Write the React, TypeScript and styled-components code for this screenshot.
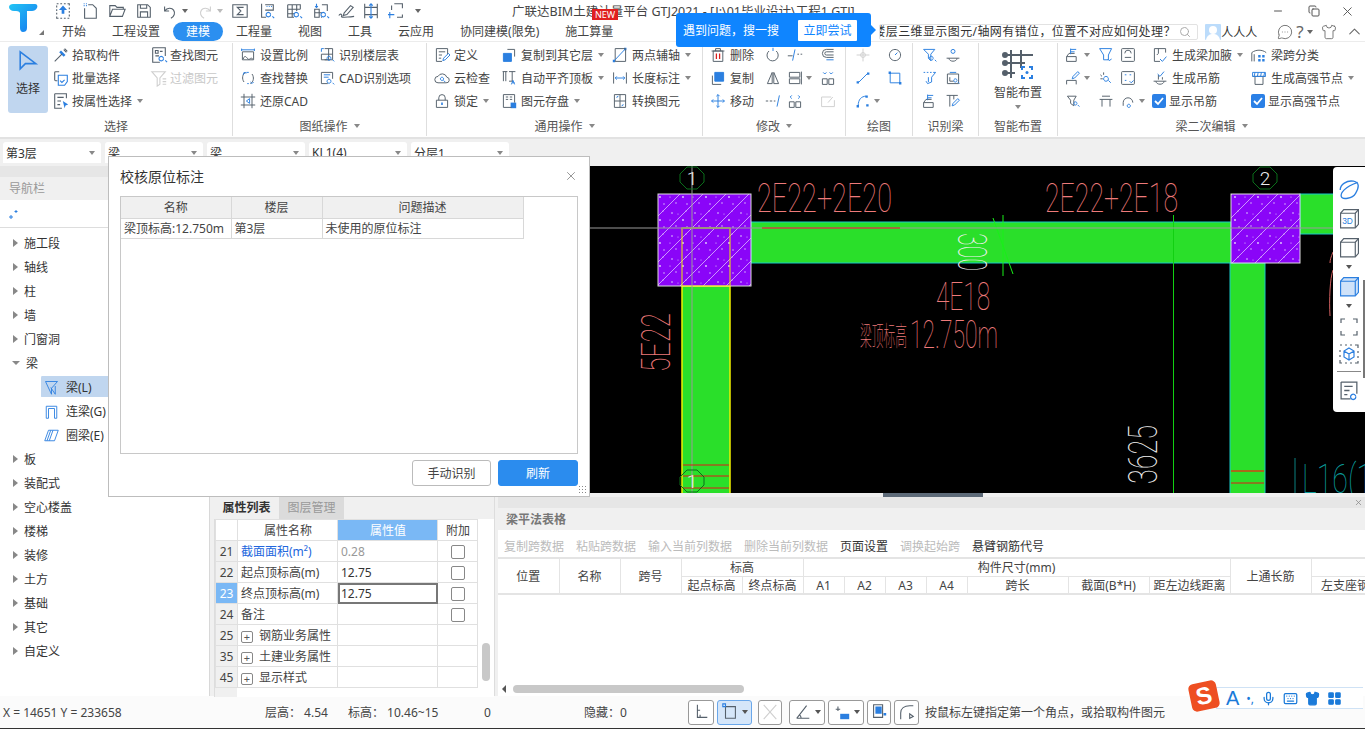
import React from 'react';
import styled, { createGlobalStyle } from 'styled-components';
import { Search, X, ChevronUp, Shirt, MessageCircleMore, Mic, Keyboard, LayoutGrid, Copy, Minus } from 'lucide-react';

const Global = createGlobalStyle`
  html, body { margin: 0; padding: 0; background: #fff; }
  #root { width: 1365px; height: 729px; }
  * { box-sizing: border-box; }
`;

const DARK = '#55606b';
const BLUE = '#2b7fe0';

/* icon table: [dark strokes, blue strokes, blue fill, red strokes] in a 20x20 box */
const I: Record<string, [string, string?, string?, string?]> = {
  upload: ['M3 2h2M7 2h2M11 2h2M15 2h2v2M17 6v2M17 10v2M17 14v2M17 18h-2M13 18h-2M9 18H7M5 18H3v-2M3 14v-2M3 10V8M3 6V4', '', 'M10 4l4.5 5H11.5v4h-3V9H5.5z'],
  newf: ['M8 3h5l4 4v11H4V7', 'M3 2h1M5.5 2h1M3 4h1M5.5 4h1'],
  open: ['M2 16V4h6l2 2h7v2M2 16l3-8h14l-3 8z'],
  save: ['M3 3h11l3 3v11H3zM6 3v4h7V3M6 17v-6h8v6', ''],
  undo: ['M4 5v5h5M4 10c3-4 8-4 10-1s1 7-3 9'],
  redo: ['M16 5v5h-5M16 10c-3-4-8-4-10-1s-1 7 3 9'],
  sigma: ['M2 3h16v14H2zM14 6H7l4 4-4 4h7'],
  tbl1: ['M4 2v15h5M8 3h9v6H8', 'M9.5 5h1M12 5h1M14.5 5h1M14 14a2.5 2.5 0 1 0 0 .1M16 16l2 2'],
  tbl2: ['M3 3h14v5M3 3v14h7M3 8h14M3 13h8M8 3v14M13 3v7', 'M15 14a2.5 2.5 0 1 0 0 .1M17 16l2 2'],
  tbl3: ['M3 8h5v9H3zM3 12h5M11 3h6v7M8 12h3M11 17h-1', 'M5 2v4M3.5 4.5L5 6l1.5-1.5M15 14a2.5 2.5 0 1 0 0 .1M17 16l2 2'],
  pen: ['M2 15c2-3 4-1 3 1s14 0 14 0M8 12l7-8 3 2-7 8-4 1z'],
  rows: ['M3 2v16M17 2v16M3 6h14M3 14h14', 'M10 2v16M8 4l2-2 2 2M8 16l2 2 2-2'],
  corner: ['M7 2h9v5M16 14v3h-6M4 4v5', 'M2 11v7M0 14h7'],
  arrow: ['', 'M4 3v13l4-4 8 0z'],
  pick: ['M3 17l8-8M13 4l3 3M14 3l3 3', '', 'M10 5l5 5-2 2-5-5z'],
  batch: ['M8 3H4a1 1 0 0 0-1 1v8a1 1 0 0 0 1 1h2', 'M7 7h10v7l-3 4H7zM9 13l2 2 3-3'],
  attr: ['M3 2h13v5M3 2v16h8M6 6h7M6 10h4M6 14h3', '', 'M12 10l6 4-3 1-1 3z'],
  find: ['M3 2h14v9M3 2v16h8M6 5h3v3H6zM11 6h3M6 11h4', 'M15 14a2.5 2.5 0 1 0 0 .1M17 16l2 2'],
  filter: ['M2 3h15l-6 7v7l-3 2v-9zM14 11h4M14 14h4M14 17h4'],
  ratio: ['M3 6h14v10H3zM4 15c2-6 4-2 6 0s3-3 6 0', 'M2 2v3M18 2v3M2 3.5h16'],
  replace: ['M7 3c-4 2-5 8-2 12M13 17c4-2 5-8 2-12', 'M4 6l1-3 3 1M13 15l2 2 2-2M8 3h3M9 17h2'],
  restore: ['M1 5h18M1 15h18M5 1v18M15 1v18', 'M12 7l-4 3 4 3z'],
  floor: ['M7 2h10v14H7M3 9h14M3 9v7h10M12 2v14', 'M3 2h3M3 2v4M15 14a2.5 2.5 0 1 0 0 .1M17 16l2 2'],
  cad: ['M3 3h14v8M3 3v14h8', 'M15 14a2.5 2.5 0 1 0 0 .1M17 16l2 2M6 6h8M6 9h6'],
  define: ['M3 2h14v7M3 2v16h7M6 6h8M6 10h4M6 14h3', 'M11 17l1-3 6-6 2 2-6 6z'],
  cloud: ['M5 16a4 4 0 0 1 0-8 6 6 0 0 1 11 1 3.5 3.5 0 0 1-1 7z', 'M12 11a2 2 0 1 0 0 .1M12 13l2 2'],
  lock: ['M3 9h14v9H3zM6 9V6a4 4 0 0 1 8 0v3', '', 'M9 12h2v3H9z'],
  copyf: ['M8 3h9v9', 'M3 8h10v10H3z', 'M3 8h10v10H3z'],
  align: ['M3 2v12M6 2v12M2 2h6M14 2v12M10 14h5M10 2h8', 'M13 18l2-5 2 5M14 16h3'],
  store: ['M3 2h14v10M3 2v16h10M6 5h3M11 5h3M6 8h3M11 8h3', '', 'M12 12h7v7h-7z'],
  twop: ['M4 2h13v16H4z', 'M2 18L17 2', 'M1 16h3v3H1zM15 1h3v3h-3z'],
  dim: ['M2 3v14M18 3v14', 'M4 10h12M6 8l-2 2 2 2M14 8l2 2-2 2'],
  conv: ['M3 2h14v16H3zM10 2v16M3 10h14', 'M6 6a2 2 0 0 1 2-2M14 14a2 2 0 0 1-2 2'],
  del: ['M4 5h12v13H4zM2 5h16M7 5V2h6v3', '', '', 'M8 8v7M12 8v7'],
  rot: ['M5 5a7 7 0 1 0 9 0', 'M10 1v4'],
  ext: ['M1 11h6M13 9h2M17 9h2', 'M10 3L7 17'],
  off: ['M17 3H8a5 5 0 0 0 0 10h9M17 6H8a2 2 0 0 0 0 4h9', 'M17 16H8'],
  copy2: ['M3 7v11h11', 'M6 3h11v11H6z', 'M6 3h11v11H6z'],
  mirror: ['M9 3L3 17h6zM11 3l6 14h-6z'],
  stack: ['M3 3h13v6H3zM3 11h13v6H3zM18 2v16'],
  merge: ['M3 11h6v7H3zM11 11h6v7h-6z', 'M4 3l2 2 2-2M16 3l-2 2-2-2'],
  move: ['', 'M10 2v16M2 10h16M8 4l2-2 2 2M8 16l2 2 2-2M4 8l-2 2 2 2M16 8l2 2-2 2'],
  trim: ['M1 10h3M6 10h3M11 10h2', 'M18 3l-3 14'],
  split: ['M3 11h6v7H3zM11 11h6v7h-6z', 'M6 3L4 5l2 2M14 3l2 2-2 2'],
  edit: ['M2 5h12M2 5v12h16V9M10 12l6-7'],
  point: ['M2 10h16M10 2v16M7 10a3 3 0 1 0 6 0 3 3 0 0 0-6 0'],
  gauge: ['M17 10a7 7 0 1 0 0 .1', 'M10 10l3-3'],
  line: ['', 'M4 16L16 4', 'M2 14h3v3H2zM15 3h3v3h-3z'],
  rect: ['', 'M4 4h12v12H4z', 'M2 2h3v3H2zM15 15h3v3h-3z'],
  arc: ['', 'M4 16c0-8 4-12 10-12', 'M2 15h3v3H2zM13 3h3v3h-3zM14 14h3v3h-3z'],
  fq: ['', 'M2 3h14l-5 6v8l-3-3V9z M14 14a2.5 2.5 0 1 0 0 .1M16 16l2 2'],
  hang: ['M2 14h16M5 14c0 5 10 5 10 0', 'M10 3a2.5 2.5 0 1 0 0 5 2.5 2.5 0 0 0 0-5z'],
  dashf: ['', 'M2 3h2M6 3h2M10 3h2M14 3h3l-5 6v6M8 9v6M5 14l2 3 5-2'],
  bq: ['M3 5h14v12H3zM6 9v5h5', 'M15 13a2 2 0 1 0 0 .1M16 15l2 2M6 3h8'],
  tpen: ['M2 3h14M6 3v14M11 3v5', 'M9 16l1-3 6-6 2 2-6 6z'],
  beamup: ['M2 12h12v6H2zM2 12l3-4h7', 'M7 2v7M7 3h7M7 6h5'],
  fdown: ['', 'M2 2h15l-4 8v6H7v-6zM12 15l2 2 3-2'],
  rrect: ['M3 2h14a1 1 0 0 1 1 1v14a1 1 0 0 1-1 1H3a1 1 0 0 1-1-1V3a1 1 0 0 1 1-1zM6 8a4 4 0 0 1 8 0M6 13h8'],
  penb: ['M2 18v-5h12v5', 'M9 11l1-3 6-6 2 2-6 6z'],
  spark: ['M3 6l2 2M3 11h3M7 3v3', 'M13 11a3 3 0 1 0 0 .1M13 13l3 3'],
  dots: ['M3 2h14a1 1 0 0 1 1 1v14a1 1 0 0 1-1 1H3a1 1 0 0 1-1-1V3a1 1 0 0 1 1-1z', 'M6 6h2M12 6h2M6 13h2M12 14l2 2 3-3'],
  bq2: ['M3 4h11l-3 5v7l-4-3V9z', 'M15 13a2 2 0 1 0 0 .1M16 15l2 2'],
  bridge: ['M2 8h16M5 8v9M15 8v9M5 4h10'],
  hook: ['M4 12a6 6 0 0 1 12 0M4 12v4', 'M13 16a2 2 0 1 0 0 .1'],
  haunch: ['M3 2h14v5M3 2v16h7M8 2v6l-2 2', 'M10 15l3 3 5-6'],
  hangc: ['M2 14h16M5 14c0 5 10 5 10 0M8 6v6M13 9v3', 'M7 5l3 3 5-6'],
  span: ['M1 18V7c5-4 13-4 18 0M4 18V9', '', 'M9 10h3v3H9zM14 10h3v3h-3zM9 15h3v3H9zM14 15h3v3h-3z'],
  hsnode: ['M5 8v10h10V8M2 8h16', 'M2 3h16v5H2zM5 3l-1 5M9 3l-1 5M13 3l-1 5M17 3l-1 5'],
  navf: ['', 'M2 2h16l-8 9v8zM9 10l6 9V8'],
  navu: ['', 'M3 19V3h14v16h-3V6H6v13z'],
  navr: ['', 'M6 3h13l-5 14H1zM9 3L4 17M12 3L7 17'],
  st1: ['M6 2v14h11M9 16v-3M6 8h3'],
  st2: ['M5 4h11v13H5z', 'M2 1h3v3H2z'],
  st3: ['M3 2l14 16M17 2L3 18'],
  st4: ['M3 17L14 3M3 17h14M8 17a6 6 0 0 0-2-4'],
  st5: ['M3 7h5M5.5 4v5', '', 'M8 12h10v6H8z'],
  st6: ['M4 2h10v14H4z', '', 'M6 4h7v8H6zM15 11h3v3h-3z'],
  st7: ['M3 18v-7c0-5 4-8 10-8h4M13 17v-5l4 3z'],
  orbit: ['', 'M2 10c0-5 6-9 12-8s5 6 2 11-12 6-13 3 3-9 15-13'],
  corners: ['M2 6V2h4M14 2h4v4M18 14v4h-4M6 18H2v-4'],
  dcube: ['M1 1h2M6 1h2M11 1h2M16 1h3v3M19 7v2M19 12v2M19 17v2h-3M13 19h-2M8 19H6M3 19H1v-3M1 13v-2M1 8V6', 'M10 4l5 3v6l-5 3-5-3V7zM5 7l5 3 5-3M10 10v6'],
  rep: ['M2 2h15v11M2 2v16h9M5 6h8M5 10h5M5 14h3', 'M16 16a2.5 2.5 0 1 0 0 .1'],
};

const Ic = ({ n, s = 18, off }: { n: string; s?: number; off?: boolean }) => {
  const [d, b, f, r] = I[n] || [''];
  return (
    <svg width={s} height={s} viewBox="0 0 20 20" fill="none" strokeWidth={1.2} style={{ flex: 'none' }}>
      {f && <path d={f} fill={off ? '#ccc' : BLUE} />}
      {d && <path d={d} stroke={off ? '#cfcfcf' : DARK} />}
      {b && <path d={b} stroke={off ? '#cfcfcf' : BLUE} />}
      {r && <path d={r} stroke="#d92020" strokeWidth={1.6} />}
    </svg>
  );
};

const BoxIcon = ({ on, label }: { on?: boolean; label?: string }) => (
  <svg width="21" height="21" viewBox="0 0 20 20" fill="none" stroke={on ? BLUE : DARK} strokeWidth="1.1" style={{ flex: 'none' }}>
    <path d="M1.5 5l3-3.500h14v14l-3 3.500h-14z" fill={on ? '#cfe2f9' : '#fff'} />
    <path d="M1.5 5h14v13.500M15.500 5l3-3.500" />
    {label && <text x="3" y="15" fontSize="8" fontFamily="Liberation Sans, sans-serif" fill={BLUE} stroke="none">{label}</text>}
  </svg>
);

const Root = styled.div`
  position: relative; width: 1365px; height: 729px; overflow: hidden; background: #fff; display: flex; flex-direction: column;
  font-family: "Noto Sans", "Noto Sans CJK SC", sans-serif; font-size: 12px; color: #333;
`;
const Header = styled.header`display: flex; height: 42px; background: #fff; border-bottom: 1px solid #ececec;`;
const LogoBox = styled.div`position: relative; width: 49px; flex: none; padding: 3px 0 0 8px;`;
const LogoCorner = styled.span`position: absolute; left: 39px; top: 30px; width: 0; height: 0; border-left: 5px solid transparent; border-bottom: 5px solid #777;`;
const HeadRight = styled.div`flex: 1; min-width: 0; display: flex; flex-direction: column;`;
const TopRow = styled.div`display: flex; align-items: center; height: 22px;`;
const Qat = styled.div`display: flex; align-items: center; width: 463px; padding-left: 5px; flex: none;`;
const QatSlot = styled.span<{ $w: number }>`display: inline-flex; align-items: center; width: ${p => p.$w}px;`;
const Title = styled.div`position: relative; top: 1px; white-space: nowrap; font-size: 12.5px; color: #444; line-height: 22px; flex: none;`;
const NewBadge = styled.span`position: absolute; left: 80px; top: 8px; width: 26px; height: 11px; background: #e02020; color: #fff; font-size: 9px; line-height: 11px; text-align: center;`;
const WinCtl = styled.div`margin-left: auto; display: flex; align-items: center; gap: 20px; padding-right: 10px; color: #555; flex: none;`;
const TabRow = styled.nav`display: flex; align-items: center; height: 19px;`;
const Tab = styled.span<{ $on?: boolean }>`
  padding: 0 13px; height: 19px; line-height: 19px; border-radius: 10px; white-space: nowrap;
  background: ${p => (p.$on ? '#2b8ff0' : 'transparent')}; color: ${p => (p.$on ? '#fff' : '#444')};
`;
const SearchBox = styled.div`
  margin-left: 253px; width: 319px; height: 16px; background: #fff; border: 1px solid #e2e2e2; border-radius: 2px; display: flex; align-items: center; overflow: hidden; flex: none;
`;
const SearchText = styled.span`flex: 1; white-space: nowrap; overflow: hidden; margin-left: -7px; line-height: 14px; color: #333; letter-spacing: .4px;`;
const Avatar = styled.span`width: 16px; height: 16px; margin-left: 7px; background: #bcdcfb; border-radius: 1px; flex: none; display: flex;`;
const UserName = styled.span`white-space: nowrap; margin-right: 20px;`;
const HeadTools = styled.div`display: flex; align-items: center; gap: 3px; color: #666; font-size: 17px;`;

const Ribbon = styled.section`display: flex; height: 97px; background: #fff; border-bottom: 2px solid #e2e2e2;`;
const Group = styled.div<{ $w: number }>`
  width: ${p => p.$w}px; flex: none; display: flex; flex-direction: column; position: relative; height: 93px; margin-top: 1px; border-right: 1px solid #dedede;
  &:last-child { border-right: 0; flex: 1; }
`;
const GroupBody = styled.div<{ $pl: number }>`display: flex; height: 74px; padding: 0 0 0 ${p => p.$pl}px;`;
const GroupLabel = styled.div`display: flex; align-items: center; justify-content: center; gap: 6px; height: 20px; color: #555;`;
const Col = styled.div<{ $w: number }>`width: ${p => p.$w}px; flex: none; display: flex; flex-direction: column;`;
const Item = styled.div<{ $off?: boolean }>`display: flex; align-items: center; height: 23px; white-space: nowrap; color: ${p => (p.$off ? '#c8c8c8' : '#444')};`;
const Slot = styled.span`display: inline-flex; width: 20px; flex: none;`;
const Caret = styled.i<{ $ml?: number; $c?: string }>`
  display: inline-block; width: 0; height: 0; margin-left: ${p => p.$ml ?? 5}px; border: 3px solid transparent; border-top: 4px solid ${p => p.$c ?? '#888'}; border-bottom: 0; flex: none;
`;
const BigBtn = styled.div`width: 40px; height: 67px; margin: 3px 4px 0 8px; background: #c0d6ef; border-radius: 3px; display: flex; flex-direction: column; align-items: center; padding-top: 2px; flex: none;`;
const BigLabel = styled.span`margin-top: 5px;`;
const BigSmart = styled.div`width: 100%; display: flex; flex-direction: column; align-items: center; padding-top: 6px; gap: 4px; color: #444;`;
const Check = styled.span`width: 14px; height: 14px; background: #2b80e6; border-radius: 2px; margin-right: 3px; display: inline-flex; align-items: center; justify-content: center; flex: none;`;

const SelBar = styled.div`display: flex; gap: 4px; height: 27px; padding: 3px 0 0 3px; background: #f0f0f0;`;
const Sel = styled.div`width: 98px; height: 21px; background: #fff; border-radius: 3px 3px 0 0; display: flex; align-items: center; justify-content: space-between; padding: 0 6px 0 3px; color: #333;`;

const Main = styled.main`display: flex; height: 530px; background: #f0f0f0;`;
const Nav = styled.aside`width: 210px; flex: none; background: #fff; border-right: 1px solid #d8d8d8; display: flex; flex-direction: column;`;
const NavStrip = styled.div`height: 11px; background: #e6e6e6;`;
const NavHead = styled.div`height: 23px; background: #f0f0f0; color: #999; padding-left: 9px; line-height: 24px; font-size: 12px;`;
const NavTool = styled.div`height: 28px; border-bottom: 1px solid #ddd; display: flex; align-items: center; padding-left: 9px;`;
const Tree = styled.ul`list-style: none; margin: 0; padding: 3px 0 0;`;
const TreeRow = styled.li`height: 24px; display: flex; align-items: center; padding-left: 13px;`;
const Tri = styled.i<{ $open?: boolean }>`
  width: 0; height: 0; margin-right: 6px; flex: none;
  ${p => (p.$open
    ? 'border: 4px solid transparent; border-top: 4px solid #888; border-bottom: 0; margin-left: -1px;'
    : 'border: 4px solid transparent; border-left: 5px solid #888; border-right: 0;')}
`;
const TreeChild = styled.li<{ $on?: boolean }>`
  height: 24px; margin-left: 41px; padding: 1px 0 1px 3px; display: flex; align-items: center; gap: 7px; white-space: nowrap;
  background: ${p => (p.$on ? 'linear-gradient(#c0d6ef,#c0d6ef) 0 1px/100% 21px no-repeat' : 'none')}; border-radius: 3px 0 0 3px;
`;
const Work = styled.div`flex: 1; min-width: 0; margin-left: 4px; display: flex; flex-direction: column;`;
const Canvas = styled.div`height: 327px; background: #000; position: relative; overflow: hidden;`;
const Splitter = styled.div`height: 4px; background: #f0f0f0;`;
const SplitHandle = styled.div`width: 100px; height: 4px; margin-left: 669px; background: #5d6a78;`;
const Lower = styled.div`flex: 1; display: flex; gap: 2px; min-height: 0;`;
const PropPanel = styled.section`width: 281px; flex: none; background: #f0f0f0; display: flex; flex-direction: column; border-right: 1px solid #ddd;`;
const PropTabs = styled.div`display: flex; height: 22px; padding-left: 0;`;
const PropTab = styled.span<{ $on?: boolean }>`
  width: 65px; text-align: center; line-height: 22px; font-weight: ${p => (p.$on ? 700 : 400)};
  background: ${p => (p.$on ? '#f0f0f0' : '#dbdbdb')}; color: ${p => (p.$on ? '#333' : '#999')};
`;
const PropBody = styled.div`flex: 1; background: #fff; position: relative; border-left: 1px solid #ddd;`;
const PropTable = styled.table`border-collapse: collapse; table-layout: fixed; width: 262px; background: #fff;
  td, th { border: 1px solid #e0e0e0; height: 21px; padding: 0 2px 0 3px; font-weight: 400; white-space: nowrap; overflow: hidden; }
`;
const HeadCell = styled.th<{ $hl?: boolean }>`
  text-align: center; background: ${p => (p.$hl ? '#7ab8f5' : '#fff')}; color: ${p => (p.$hl ? '#fff' : '#444')};
`;
const IdxCell = styled.td<{ $on?: boolean }>`
  background: ${p => (p.$on ? '#7ab8f5' : '#f0f0f0')}; color: ${p => (p.$on ? '#fff' : '#444')}; font-weight: ${p => (p.$on ? 700 : 400)}; text-align: center; font-size: 12px;
  && { padding: 0; }
`;
const NameCell = styled.td<{ $link?: boolean }>`color: ${p => (p.$link ? '#2266dd' : '#444')};`;
const ValCell = styled.td<{ $mute?: boolean; $edit?: boolean }>`
  color: ${p => (p.$mute ? '#999' : '#333')};
  && { ${p => (p.$edit ? 'outline: 2px solid #777; outline-offset: -2px;' : '')} }
`;
const BoxCell = styled.td`&& { text-align: center; padding: 0; }`;
const CB = styled.span`display: inline-block; width: 14px; height: 14px; border: 1px solid #888; border-radius: 2px; vertical-align: middle;`;
const Plus = styled.span`display: inline-block; width: 12px; height: 12px; border: 1px solid #888; border-radius: 2px; line-height: 10px; text-align: center; font-size: 11px; margin-right: 6px; color: #555; vertical-align: middle;`;
const Thumb = styled.div`position: absolute; left: 267px; top: 124px; width: 8px; height: 38px; background: #c8c8c8; border-radius: 4px;`;
const StubRow = styled.div`width: 22px; height: 9px; background: #f0f0f0;`;

const BeamPanel = styled.section`flex: 1; min-width: 0; background: #fff; display: flex; flex-direction: column; overflow: hidden; margin-left: 1px;`;
const BeamStrip = styled.div`height: 11px; background: #e6e6e6; display: flex; justify-content: flex-end; align-items: center; padding-right: 2px; color: #888;`;
const BeamHead = styled.div`height: 22px; background: #f0f0f0; line-height: 23px; padding-left: 8px; font-weight: 700; color: #777;`;
const BeamTools = styled.div`height: 29px; display: flex; align-items: center; gap: 12px; padding: 5px 0 0 6px; border-bottom: 2px solid #e4e4e4;`;
const BeamTool = styled.span<{ $on?: boolean }>`color: ${p => (p.$on ? '#333' : '#bbb')}; white-space: nowrap;`;
const BeamScroll = styled.div`flex: 1; overflow: hidden; position: relative;`;
const BeamTable = styled.table`border-collapse: collapse; table-layout: fixed; width: 893px;
  border-bottom: 2px solid #e4e4e4;
  th { border-right: 1px solid #e4e4e4; border-bottom: 1px solid #e4e4e4; font-weight: 400; color: #444; padding: 2px 0 0; height: 17px; line-height: 14px; white-space: nowrap; overflow: hidden; }
`;
const HScroll = styled.div`position: absolute; left: 4px; right: 0; bottom: 3px; height: 8px; display: flex; align-items: center;`;
const HThumb = styled.div`width: 231px; height: 8px; background: #c8c8c8; border-radius: 4px; margin-left: 7px;`;
const HArrow = styled.i`width: 0; height: 0; border: 4px solid transparent; border-right: 4px solid #555; border-left: 0;`;

const Status = styled.footer`height: 33px; background: #fbfbfb; border-bottom: 1px solid #333; display: flex; align-items: center; white-space: nowrap; padding: 0 0 0 3px; color: #444;`;
const StatText = styled.span<{ $w: number }>`width: ${p => p.$w}px; flex: none;`;
const StatBtns = styled.div`display: flex; gap: 3px; flex: none; align-items: center;`;
const StatBtn = styled.span<{ $w: number; $on?: boolean; $ml?: number }>`
  width: ${p => p.$w}px; height: 25px; margin-left: ${p => p.$ml ?? 0}px; border: 1px solid ${p => (p.$on ? '#6aa7ea' : '#999')}; border-radius: 3px;
  background: ${p => (p.$on ? '#d5e6f9' : '#fff')}; display: inline-flex; align-items: center; justify-content: center; gap: 3px;
`;
const StatHint = styled.span`margin-left: 6px;`;

const Dialog = styled.div`position: absolute; left: 108px; top: 156px; width: 482px; height: 341px; background: #fff; border: 1px solid #bdbdbd; display: flex; flex-direction: column; padding: 0 11px;`;
const DlgHead = styled.div`height: 39px; padding-bottom: 2px; display: flex; align-items: center; justify-content: space-between; font-size: 14px; color: #333;`;
const DlgBox = styled.div`height: 258px; border: 1px solid #c8c8c8;`;
const DlgTable = styled.table`border-collapse: collapse; table-layout: fixed; width: 402px;
  th, td { border: 1px solid #d8d8d8; height: 20px; padding: 0 3px; font-weight: 400; white-space: nowrap; overflow: hidden; color: #444; }
  th { background: #f0f0f0; text-align: center; height: 21px; border-top: 0; }
  td:first-child, th:first-child { border-left: 0; }
`;
const DlgFoot = styled.div`display: flex; justify-content: flex-end; gap: 7px; margin-top: 6px;`;
const DlgBtn = styled.button<{ $pri?: boolean }>`
  width: ${p => (p.$pri ? 80 : 79)}px; height: 26px; border-radius: 3px; font: inherit; padding: 0;
  border: 1px solid ${p => (p.$pri ? '#2b8cee' : '#bbb')}; background: ${p => (p.$pri ? '#2b8cee' : '#fff')}; color: ${p => (p.$pri ? '#fff' : '#444')};
`;
const Grip = styled.span`position: absolute; right: 3px; bottom: 3px; width: 8px; height: 8px; background: radial-gradient(#888 40%, transparent 45%) 0 0/3px 3px;`;

const Tip = styled.div`position: absolute; left: 676px; top: 13px; width: 195px; height: 34px; background: #0f85ff; border-radius: 3px; color: #fff; display: flex; align-items: center; padding-left: 7px;
  &::after { content: ''; position: absolute; right: -5px; top: 12px; border: 5px solid transparent; border-left: 5px solid #0f85ff; border-right: 0; }
`;
const TipText = styled.span`width: 115px; flex: none;`;
const TipBtn = styled.span`width: 59px; height: 21px; background: #fff; color: #0f85ff; text-align: center; line-height: 21px; border-radius: 1px;`;

const ViewBar = styled.div`position: absolute; right: 0; top: 1px; width: 32px; height: 245px; background: #fff; border-radius: 4px 0 0 4px; display: flex; flex-direction: column; align-items: center; padding-top: 12px;`;
const ViewCell = styled.span<{ $h: number }>`height: ${p => p.$h}px; display: flex; align-items: center; justify-content: center; flex: none; color: #555;`;
const ViewRule = styled.span`width: 24px; height: 1px; background: #888; margin: 2px 0 0; flex: none;`;
const ViewScroll = styled.span`position: absolute; right: 0; top: 113px; width: 2px; height: 98px; background: #777;`;

const Ime = styled.div`position: absolute; left: 1190px; top: 682px; display: flex; align-items: flex-start;`;
const ImeLogo = styled.div`width: 28px; height: 28px; background: #ee4f22; color: #fff; border-radius: 5px; transform: rotate(-12deg); text-align: center; font: 700 24px/28px "Liberation Sans", sans-serif; flex: none; z-index: 1;`;
const ImeBar = styled.div`width: 147px; height: 22px; margin-top: 5px; margin-left: -2px; background: #fff; border: 1px solid #cfe2f5; border-right: 0; display: flex; align-items: center; gap: 7px; padding-left: 9px; color: #1a7ad9;`;
const ImeA = styled.span`font: 400 20px "Liberation Sans", sans-serif; color: #1a7ad9;`;

const cadFont = 'Roboto, "Noto Sans CJK SC", sans-serif';
const Cad = ({ x, y, w, size, c, rot, children }: { x: number; y: number; w: number; size: number; c: string; rot?: number; children: string }) => (
  <text
    x={x} y={y} textLength={w} lengthAdjust="spacingAndGlyphs" fontFamily={cadFont} fontWeight={100} fontSize={size} fill={c}
    transform={rot ? `rotate(${rot} ${x} ${y})` : undefined}
  >{children}</text>
);

const Bubble = ({ x, y, t }: { x: number; y: number; t: string }) => (
  <g>
    <polygon points={`${x - 5},${y - 11} ${x + 5},${y - 11} ${x + 12},${y - 4} ${x + 12},${y + 4} ${x + 5},${y + 11} ${x - 5},${y + 11} ${x - 12},${y + 4} ${x - 12},${y - 4}`} fill="none" stroke="#0a6e1a" />
    <text x={x} y={y + 7} textAnchor="middle" fontFamily="Roboto, sans-serif" fontWeight={300} fontSize={19} fill="#eee">{t}</text>
  </g>
);

const RED = '#ee7a7a';

const CadDrawing = () => (
  <svg width={1151} height={327} viewBox="214 166 1151 327" style={{ display: 'block' }}>
    <defs>
      <pattern id="hatch" patternUnits="userSpaceOnUse" width="23" height="23">
        <rect width="23" height="23" fill="#8a05f8" />
        <path d="M-2 25L25 -2" stroke="#e6d4ff" strokeWidth=".7" />
        <circle cx="5" cy="6" r=".8" fill="#e6d4ff" /><circle cx="16" cy="13" r=".9" fill="#e6d4ff" /><circle cx="9" cy="19" r=".7" fill="#e6d4ff" />
        <circle cx="19" cy="4" r=".6" fill="#e6d4ff" /><circle cx="3" cy="13" r=".6" fill="#e6d4ff" /><circle cx="20" cy="20" r=".7" fill="#e6d4ff" />
        <circle cx="11" cy="7" r=".5" fill="#e6d4ff" />
      </pattern>
    </defs>
    <rect x="751" y="222" width="480" height="41" fill="#2adf2a" stroke="#18c8c8" />
    <rect x="1300" y="194" width="70" height="40" fill="#2adf2a" stroke="#18c8c8" />
    <rect x="682" y="286" width="48" height="210" fill="#2adf2a" stroke="#f0f000" strokeWidth="1.5" />
    <rect x="1230" y="263" width="35" height="234" fill="#2adf2a" stroke="#18c8c8" />
    <rect x="658" y="194" width="93" height="92" fill="url(#hatch)" stroke="#ddd" />
    <rect x="1231" y="194" width="69" height="69" fill="url(#hatch)" stroke="#ddd" />
    <rect x="682" y="228" width="48" height="58" fill="none" stroke="#f0f000" />
    <path d="M682 228H730" stroke="#a08a60" strokeWidth="2" />
    <path d="M1173.5 215V493" stroke="#12d012" />
    <path d="M1003 215V276M993 218l20 56" stroke="#18f018" />
    <path d="M590 228H1333" stroke="#9a9a9a" />
    <path d="M692 166V493" stroke="#9a9a9a" />
    <path d="M762 228H900" stroke="#e01818" />
    <path d="M683 465H729M683 476H729M683 488H729" stroke="#e01818" />
    <path d="M1231 471H1264" stroke="#a86a1a" strokeWidth="2" />
    <path d="M1231 483H1264" stroke="#e01818" />
    <path d="M1295 458V493" stroke="#0a8080" />
    <path d="M1333 252c-2 5-3 8-3 11M1333 270c-3 8-4 30-3 46" stroke="#d06060" />
    <Bubble x={692} y={178} t="1" />
    <Bubble x={1265} y={178} t="2" />
    <Bubble x={692} y={481} t="1" />
    <Cad x={757} y={212} w={135} size={41} c={RED}>2E22+2E20</Cad>
    <Cad x={1045} y={212} w={133} size={41} c={RED}>2E22+2E18</Cad>
    <Cad x={936} y={310} w={54} size={39} c={RED}>4E18</Cad>
    <Cad x={910} y={348} w={88} size={39} c={RED}>12.750m</Cad>
    <Cad x={860} y={346} w={47} size={27} c={RED}>梁顶标高</Cad>
    <Cad x={958} y={233} w={38} size={40} c="#f0f0f0" rot={90}>300</Cad>
    <Cad x={670} y={372} w={59} size={41} c={RED} rot={-90}>5E22</Cad>
    <Cad x={1157} y={484} w={59} size={41} c="#f0f0f0" rot={-90}>3625</Cad>
    <Cad x={1302} y={493} w={70} size={40} c="#0a9a9a">L16(1</Cad>
  </svg>
);

const tree1 = ['施工段', '轴线', '柱', '墙', '门窗洞'];
const tree2 = ['板', '装配式', '空心楼盖', '楼梯', '装修', '土方', '基础', '其它', '自定义'];

function Tick() {
  return <svg width="10" height="10" viewBox="0 0 10 10" fill="none" stroke="#fff" strokeWidth="1.8"><path d="M1 5l3 3 5-6" /></svg>;
}

const App = () => (
  <Root>
    <Global />
    <Header>
      <LogoBox>
        <svg width="31" height="30" viewBox="0 0 31 30">
          <defs><linearGradient id="lg" x1="0" x2="1" y1="0" y2="1"><stop offset="0" stopColor="#22c6f5" /><stop offset="1" stopColor="#1575ee" /></linearGradient></defs>
          <path d="M1 4c0-2 2-3 4-3h22c2 0 3 2 2 4s-3 3-5 3h-5v17c0 3-2 4-4 4s-3-2-3-4V10C11 8 9 8 6 8S1 6 1 4z" fill="url(#lg)" />
        </svg>
        <LogoCorner />
      </LogoBox>
      <HeadRight>
        <TopRow>
          <Qat>
            <QatSlot $w={27}><Ic n="upload" /></QatSlot>
            <QatSlot $w={27}><Ic n="newf" /></QatSlot>
            <QatSlot $w={27}><Ic n="open" /></QatSlot>
            <QatSlot $w={26}><Ic n="save" /></QatSlot>
            <QatSlot $w={35}><Ic n="undo" /><Caret $ml={3} $c="#666" /></QatSlot>
            <QatSlot $w={35}><Ic n="redo" off /><Caret $ml={3} $c="#bbb" /></QatSlot>
            <QatSlot $w={27}><Ic n="sigma" /></QatSlot>
            <QatSlot $w={27}><Ic n="tbl1" /></QatSlot>
            <QatSlot $w={27}><Ic n="tbl2" /></QatSlot>
            <QatSlot $w={25}><Ic n="tbl3" /></QatSlot>
            <QatSlot $w={25}><Ic n="pen" /></QatSlot>
            <QatSlot $w={26}><Ic n="rows" /></QatSlot>
            <QatSlot $w={24}><Ic n="corner" /></QatSlot>
            <QatSlot $w={10}><Caret $ml={3} $c="#666" /></QatSlot>
          </Qat>
          <Title>广联达BIM土建计量平台 GTJ2021 - [J:\01毕业设计\工程1.GTJ]<NewBadge>NEW</NewBadge></Title>
          <WinCtl>
            <Minus size={12} strokeWidth={2} />
            <Copy size={12} style={{ marginLeft: 4 }} />
            <X size={15} strokeWidth={1.5} />
          </WinCtl>
        </TopRow>
        <TabRow>
          <Tab>开始</Tab><Tab>工程设置</Tab><Tab $on>建模</Tab><Tab>工程量</Tab><Tab>视图</Tab><Tab>工具</Tab><Tab>云应用</Tab><Tab>协同建模(限免)</Tab><Tab>施工算量</Tab>
          <SearchBox>
            <SearchText>楼层三维显示图元/轴网有错位，位置不对应如何处理？</SearchText>
            <Search size={12} color="#aaa" style={{ margin: '0 6px', flex: 'none' }} />
          </SearchBox>
          <Avatar>
            <svg width="16" height="16" viewBox="0 0 16 16" fill="#fff"><circle cx="8" cy="6" r="4" /><path d="M1 16c1-5 4-6 7-6s6 1 7 6z" /></svg>
          </Avatar>
          <UserName>人人人</UserName>
          <HeadTools>
            <MessageCircleMore size={16} strokeWidth={1.3} />
            <span>?</span><Caret $ml={0} $c="#666" />
            <Shirt size={16} strokeWidth={1.3} style={{ margin: '0 3px 0 5px' }} />
            <ChevronUp size={19} strokeWidth={1.3} style={{ marginLeft: 2 }} />
          </HeadTools>
        </TabRow>
      </HeadRight>
    </Header>

    <Ribbon>
      <Group $w={233}>
        <GroupBody $pl={0}>
          <BigBtn><Ic n="arrow" s={26} /><BigLabel>选择</BigLabel></BigBtn>
          <Col $w={98}>
            <Item><Slot><Ic n="pick" /></Slot>拾取构件</Item>
            <Item><Slot><Ic n="batch" /></Slot>批量选择</Item>
            <Item><Slot><Ic n="attr" /></Slot>按属性选择<Caret /></Item>
          </Col>
          <Col $w={80}>
            <Item><Slot><Ic n="find" /></Slot>查找图元</Item>
            <Item $off><Slot><Ic n="filter" off /></Slot>过滤图元</Item>
          </Col>
        </GroupBody>
        <GroupLabel>选择</GroupLabel>
      </Group>
      <Group $w={194}>
        <GroupBody $pl={7}>
          <Col $w={79}>
            <Item><Slot><Ic n="ratio" s={16} /></Slot>设置比例</Item>
            <Item><Slot><Ic n="replace" s={16} /></Slot>查找替换</Item>
            <Item><Slot><Ic n="restore" s={16} /></Slot>还原CAD</Item>
          </Col>
          <Col $w={104}>
            <Item><Slot><Ic n="floor" s={16} /></Slot>识别楼层表</Item>
            <Item><Slot><Ic n="cad" s={16} /></Slot>CAD识别选项</Item>
          </Col>
        </GroupBody>
        <GroupLabel>图纸操作<Caret $ml={0} /></GroupLabel>
      </Group>
      <Group $w={276}>
        <GroupBody $pl={7}>
          <Col $w={67}>
            <Item><Slot><Ic n="define" s={16} /></Slot>定义</Item>
            <Item><Slot><Ic n="cloud" s={16} /></Slot>云检查</Item>
            <Item><Slot><Ic n="lock" s={16} /></Slot>锁定<Caret /></Item>
          </Col>
          <Col $w={111}>
            <Item><Slot><Ic n="copyf" s={16} /></Slot>复制到其它层<Caret /></Item>
            <Item><Slot><Ic n="align" s={16} /></Slot>自动平齐顶板<Caret /></Item>
            <Item><Slot><Ic n="store" s={16} /></Slot>图元存盘<Caret /></Item>
          </Col>
          <Col $w={85}>
            <Item><Slot><Ic n="twop" s={16} /></Slot>两点辅轴<Caret /></Item>
            <Item><Slot><Ic n="dim" s={16} /></Slot>长度标注<Caret /></Item>
            <Item><Slot><Ic n="conv" s={16} /></Slot>转换图元</Item>
          </Col>
        </GroupBody>
        <GroupLabel>通用操作<Caret $ml={0} /></GroupLabel>
      </Group>
      <Group $w={143}>
        <GroupBody $pl={7}>
          <Col $w={55}>
            <Item><Slot><Ic n="del" s={16} /></Slot>删除</Item>
            <Item><Slot><Ic n="copy2" s={16} /></Slot>复制</Item>
            <Item><Slot><Ic n="move" s={16} /></Slot>移动</Item>
          </Col>
          <Col $w={22}>
            <Item><Ic n="rot" s={16} /></Item>
            <Item><Ic n="mirror" s={16} /></Item>
            <Item><Ic n="trim" s={16} /></Item>
          </Col>
          <Col $w={33}>
            <Item><Ic n="ext" s={16} /></Item>
            <Item><Ic n="stack" s={16} /><Caret $ml={3} /></Item>
            <Item><Ic n="split" s={16} /></Item>
          </Col>
          <Col $w={24}>
            <Item><Ic n="off" s={16} /></Item>
            <Item><Ic n="merge" s={16} /></Item>
            <Item><Ic n="edit" s={16} off /></Item>
          </Col>
        </GroupBody>
        <GroupLabel>修改<Caret $ml={0} /></GroupLabel>
      </Group>
      <Group $w={67}>
        <GroupBody $pl={9}>
          <Col $w={32}>
            <Item><Ic n="point" s={16} off /></Item>
            <Item><Ic n="line" s={16} /></Item>
            <Item><Ic n="arc" s={16} /><Caret $ml={3} /></Item>
          </Col>
          <Col $w={22}>
            <Item><Ic n="gauge" s={16} /></Item>
            <Item><Ic n="rect" s={16} /></Item>
          </Col>
        </GroupBody>
        <GroupLabel>绘图</GroupLabel>
      </Group>
      <Group $w={66}>
        <GroupBody $pl={9}>
          <Col $w={23}>
            <Item><Ic n="fq" s={16} /></Item>
            <Item><Ic n="dashf" s={16} /></Item>
            <Item><Ic n="beamup" s={16} /></Item>
          </Col>
          <Col $w={23}>
            <Item><Ic n="hang" s={16} /></Item>
            <Item><Ic n="bq" s={16} /></Item>
            <Item><Ic n="tpen" s={16} /></Item>
          </Col>
        </GroupBody>
        <GroupLabel>识别梁</GroupLabel>
      </Group>
      <Group $w={79}>
        <GroupBody $pl={0}>
          <BigSmart>
            <svg width="32" height="30" viewBox="0 0 32 30" fill="none" stroke={DARK} strokeWidth="2">
              <path d="M9 1v28M19 1v18M1 6h30M1 14h22M1 24h12" />
              <circle cx="3" cy="6" r="2" /><circle cx="3" cy="14" r="2" /><circle cx="3" cy="24" r="2" />
              <path d="M20 21v-3h3M27 18h3v3M30 26v3h-3M23 29h-3v-3" stroke={BLUE} />
              <circle cx="25" cy="23.5" r="1.5" fill={BLUE} stroke="none" />
            </svg>
            <span>智能布置</span>
            <Caret $ml={0} />
          </BigSmart>
        </GroupBody>
        <GroupLabel>智能布置</GroupLabel>
      </Group>
      <Group $w={307}>
        <GroupBody $pl={7}>
          <Col $w={33}>
            <Item><Ic n="beamup" s={16} /><Caret $ml={3} /></Item>
            <Item><Ic n="penb" s={16} /><Caret $ml={3} /></Item>
            <Item><Ic n="bq2" s={16} /></Item>
          </Col>
          <Col $w={22}>
            <Item><Ic n="fdown" s={16} /></Item>
            <Item><Ic n="spark" s={16} /></Item>
            <Item><Ic n="bridge" s={16} /></Item>
          </Col>
          <Col $w={32}>
            <Item><Ic n="rrect" s={16} /></Item>
            <Item><Ic n="dots" s={16} /></Item>
            <Item><Ic n="hook" s={16} /><Caret $ml={3} /></Item>
          </Col>
          <Col $w={99}>
            <Item><Slot><Ic n="haunch" s={16} /></Slot>生成梁加腋<Caret /></Item>
            <Item><Slot><Ic n="hangc" s={16} /></Slot>生成吊筋</Item>
            <Item><Check><Tick /></Check>显示吊筋</Item>
          </Col>
          <Col $w={110}>
            <Item><Slot><Ic n="span" s={16} /></Slot>梁跨分类</Item>
            <Item><Slot><Ic n="hsnode" s={16} /></Slot>生成高强节点<Caret /></Item>
            <Item><Check><Tick /></Check>显示高强节点</Item>
          </Col>
        </GroupBody>
        <GroupLabel>梁二次编辑<Caret $ml={0} /></GroupLabel>
      </Group>
    </Ribbon>

    <SelBar>
      <Sel>第3层<Caret /></Sel><Sel>梁<Caret /></Sel><Sel>梁<Caret /></Sel><Sel>KL1(4)<Caret /></Sel><Sel>分层1<Caret /></Sel>
    </SelBar>

    <Main>
      <Nav>
        <NavStrip />
        <NavHead>导航栏</NavHead>
        <NavTool><svg width="10" height="10" viewBox="0 0 10 10" stroke={BLUE} fill="none"><path d="M2 6v4M0 8h4M7 1v3M5.5 2.5h3" /></svg></NavTool>
        <Tree>
          {tree1.map(t => <TreeRow key={t}><Tri />{t}</TreeRow>)}
          <TreeRow><Tri $open />梁</TreeRow>
          <TreeChild $on><Ic n="navf" s={15} />梁(L)</TreeChild>
          <TreeChild><Ic n="navu" s={15} />连梁(G)</TreeChild>
          <TreeChild><Ic n="navr" s={15} />圈梁(E)</TreeChild>
          {tree2.map(t => <TreeRow key={t}><Tri />{t}</TreeRow>)}
        </Tree>
      </Nav>
      <Work>
        <Canvas>
          <CadDrawing />
          <ViewBar>
            <ViewCell $h={22}><Ic n="orbit" s={22} /></ViewCell>
            <ViewCell $h={34}><BoxIcon label="3D" /></ViewCell>
            <ViewCell $h={24}><BoxIcon /></ViewCell>
            <ViewCell $h={16}><Caret $ml={0} $c="#555" /></ViewCell>
            <ViewCell $h={22}><BoxIcon on /></ViewCell>
            <ViewCell $h={18}><Caret $ml={0} $c="#555" /></ViewCell>
            <ViewCell $h={24}><Ic n="corners" s={20} /></ViewCell>
            <ViewCell $h={30}><Ic n="dcube" s={20} /></ViewCell>
            <ViewRule />
            <ViewCell $h={36}><Ic n="rep" s={21} /></ViewCell>
            <ViewScroll />
          </ViewBar>
        </Canvas>
        <Splitter><SplitHandle /></Splitter>
        <Lower>
          <PropPanel>
            <PropTabs><PropTab $on>属性列表</PropTab><PropTab>图层管理</PropTab></PropTabs>
            <PropBody>
              <PropTable>
                <colgroup><col width="22" /><col width="100" /><col width="100" /><col width="40" /></colgroup>
                <thead><tr><HeadCell /><HeadCell>属性名称</HeadCell><HeadCell $hl>属性值</HeadCell><HeadCell>附加</HeadCell></tr></thead>
                <tbody>
                  <tr><IdxCell>21</IdxCell><NameCell $link>截面面积(m²)</NameCell><ValCell $mute>0.28</ValCell><BoxCell><CB /></BoxCell></tr>
                  <tr><IdxCell>22</IdxCell><NameCell>起点顶标高(m)</NameCell><ValCell>12.75</ValCell><BoxCell><CB /></BoxCell></tr>
                  <tr><IdxCell $on>23</IdxCell><NameCell>终点顶标高(m)</NameCell><ValCell $edit>12.75</ValCell><BoxCell><CB /></BoxCell></tr>
                  <tr><IdxCell>24</IdxCell><NameCell>备注</NameCell><ValCell /><BoxCell><CB /></BoxCell></tr>
                  <tr><IdxCell>25</IdxCell><NameCell><Plus>+</Plus>钢筋业务属性</NameCell><ValCell /><BoxCell /></tr>
                  <tr><IdxCell>35</IdxCell><NameCell><Plus>+</Plus>土建业务属性</NameCell><ValCell /><BoxCell /></tr>
                  <tr><IdxCell>45</IdxCell><NameCell><Plus>+</Plus>显示样式</NameCell><ValCell /><BoxCell /></tr>
                </tbody>
              </PropTable>
              <StubRow />
              <Thumb />
            </PropBody>
          </PropPanel>
          <BeamPanel>
            <BeamStrip><X size={9} /></BeamStrip>
            <BeamHead>梁平法表格</BeamHead>
            <BeamTools>
              <BeamTool>复制跨数据</BeamTool><BeamTool>粘贴跨数据</BeamTool><BeamTool>输入当前列数据</BeamTool><BeamTool>删除当前列数据</BeamTool>
              <BeamTool $on>页面设置</BeamTool><BeamTool>调换起始跨</BeamTool><BeamTool $on>悬臂钢筋代号</BeamTool>
            </BeamTools>
            <BeamScroll>
              <BeamTable>
                <colgroup>
                  <col width="61" /><col width="61" /><col width="61" /><col width="61" /><col width="61" />
                  <col width="41" /><col width="41" /><col width="41" /><col width="41" /><col width="101" /><col width="81" /><col width="81" />
                  <col width="81" /><col width="80" />
                </colgroup>
                <thead>
                  <tr>
                    <th rowSpan={2}>位置</th><th rowSpan={2}>名称</th><th rowSpan={2}>跨号</th>
                    <th colSpan={2}>标高</th><th colSpan={7}>构件尺寸(mm)</th>
                    <th rowSpan={2}>上通长筋</th><th />
                  </tr>
                  <tr>
                    <th>起点标高</th><th>终点标高</th><th>A1</th><th>A2</th><th>A3</th><th>A4</th><th>跨长</th><th>截面(B*H)</th><th>距左边线距离</th><th>左支座钢筋</th>
                  </tr>
                </thead>
              </BeamTable>
              <HScroll><HArrow /><HThumb /></HScroll>
            </BeamScroll>
          </BeamPanel>
        </Lower>
      </Work>
    </Main>

    <Status>
      <StatText $w={262}>X = 14651 Y = 233658</StatText>
      <StatText $w={83}>层高： 4.54</StatText>
      <StatText $w={136}>标高： 10.46~15</StatText>
      <StatText $w={100}>0</StatText>
      <StatText $w={104}>隐藏：0</StatText>
      <StatBtns>
        <StatBtn $w={26}><Ic n="st1" /></StatBtn>
        <StatBtn $w={35} $on><Ic n="st2" /><Caret $ml={0} $c="#555" /></StatBtn>
        <StatBtn $w={24} $ml={3}><Ic n="st3" off /></StatBtn>
        <StatBtn $w={36} $ml={4}><Ic n="st4" /><Caret $ml={0} $c="#555" /></StatBtn>
        <StatBtn $w={36}><Ic n="st5" /><Caret $ml={0} $c="#555" /></StatBtn>
        <StatBtn $w={24}><Ic n="st6" /></StatBtn>
        <StatBtn $w={25}><Ic n="st7" /></StatBtn>
      </StatBtns>
      <StatHint>按鼠标左键指定第一个角点，或拾取构件图元</StatHint>
    </Status>

    <Dialog>
      <DlgHead>校核原位标注<X size={14} color="#777" strokeWidth={1.3} /></DlgHead>
      <DlgBox>
        <DlgTable>
          <colgroup><col width="110" /><col width="91" /><col width="201" /></colgroup>
          <thead><tr><th>名称</th><th>楼层</th><th>问题描述</th></tr></thead>
          <tbody><tr><td>梁顶标高:12.750m</td><td>第3层</td><td>未使用的原位标注</td></tr></tbody>
        </DlgTable>
      </DlgBox>
      <DlgFoot><DlgBtn>手动识别</DlgBtn><DlgBtn $pri>刷新</DlgBtn></DlgFoot>
      <Grip />
    </Dialog>

    <Tip><TipText>遇到问题，搜一搜</TipText><TipBtn>立即尝试</TipBtn></Tip>

    <Ime>
      <ImeLogo>S</ImeLogo>
      <ImeBar>
        <ImeA>A</ImeA><span>•,</span><Mic size={15} /><Keyboard size={15} /><Shirt size={15} fill="#1a7ad9" /><LayoutGrid size={15} fill="#1a7ad9" />
      </ImeBar>
    </Ime>
  </Root>
);

export default App;
